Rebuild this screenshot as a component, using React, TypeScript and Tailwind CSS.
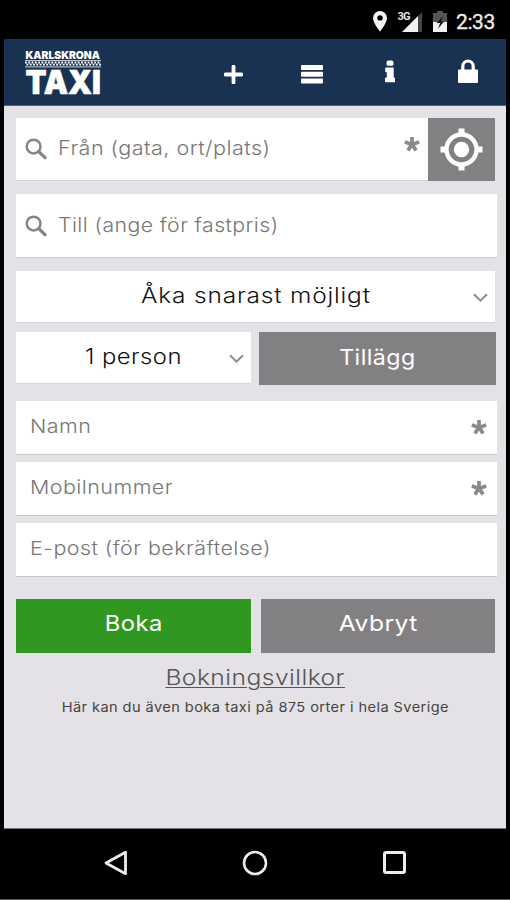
import React from "react";

function SearchIcon() {
  return (
    <svg className="h-[22px] w-[22px] shrink-0" viewBox="0 0 22 22" fill="none" stroke="#858585">
      <circle cx="8.6" cy="8.6" r="6.9" strokeWidth="2.5" />
      <path d="M13.8 13.6 20 19.6" strokeWidth="3.4" strokeLinecap="round" />
    </svg>
  );
}

function Chevron() {
  return (
    <svg className="h-[9px] w-[15px]" viewBox="0 0 15 9" fill="none" stroke="#8d8d8d" strokeWidth="2">
      <path d="M1 1.2 7.5 7.6 14 1.2" />
    </svg>
  );
}

function Star() {
  return (
    <svg className="h-[16px] w-[16px]" viewBox="0 0 16 16" stroke="#8a8a8a" strokeWidth="3.7">
      <path d="M8 8.4V1M8 8.4 .8 6M8 8.4 15.2 6M8 8l-4 6.4M8 8l4 6.4" />
    </svg>
  );
}

function StatusBar() {
  return (
    <div className="flex h-[39px] items-start pl-[373px]">
      <svg className="mt-[11px] h-[21px] w-[14px]" viewBox="0 0 14 21">
        <path fill="#f2f2f2" fillRule="evenodd" d="M7 0a7 7 0 0 0-7 7c0 5 7 13.5 7 13.5S14 12 14 7a7 7 0 0 0-7-7Zm0 4.2a2.7 2.7 0 1 1 0 5.4 2.7 2.7 0 0 1 0-5.4Z" />
      </svg>
      <svg className="mt-[11px] ml-[10px] h-[22px] w-[26px]" viewBox="0 0 26 22">
        <path fill="#444" d="M25 1v20h-5V6Z" />
        <path fill="#f2f2f2" d="M21 5v16H5Z" />
        <text x="0.5" y="8.8" fontSize="11" fontWeight="700" letterSpacing="-.9" fill="#e3e3e3" fontFamily="Roboto, sans-serif">3G</text>
      </svg>
      <svg className="mt-[11px] ml-[10px] h-[21px] w-[14px]" viewBox="0 0 14 21">
        <path fill="#555" d="M4 0h6v2h4v9H0V2h4Z" />
        <path fill="#f2f2f2" d="M0 11h14v10H0Z" />
        <path fill="#111" d="M10.5 5 3.5 12h3.7L5 17.7l6-7.3H7.8Z" />
      </svg>
      <span className="mt-[9px] ml-[9px] font-[Roboto,sans-serif] text-[21px] leading-[26px] tracking-[-0.4px] text-[#eee] [-webkit-text-stroke:0.3px_#eee]">2:33</span>
    </div>
  );
}

function Logo() {
  return (
    <svg className="mt-[8px] ml-[17px] h-[54px] w-[85px] shrink-0" viewBox="-4 -4 85 54" fill="#fff" fontFamily="Inter, sans-serif" fontWeight="900">
      <text x=".5" y="7.8" fontSize="10.3" textLength="74.5" lengthAdjust="spacingAndGlyphs">KARLSKRONA</text>
      <path d="M0 9.6h76M0 15.9h76" stroke="#fff" strokeWidth=".8" />
      <path d="M0 11.5h76M1.5 13.6h74.5" stroke="#fff" strokeWidth="1.8" strokeDasharray="1.8 1.5" />
      <text x=".5" y="42.8" fontSize="33" textLength="75.5" lengthAdjust="spacingAndGlyphs" stroke="#fff" strokeWidth=".6">TAXI</text>
    </svg>
  );
}

function Header() {
  return (
    <header className="flex h-[67px] items-start border-b border-[#52657d] bg-[#193252]">
      <Logo />
      <svg className="mt-[26px] ml-[118px] h-[19px] w-[19px]" viewBox="0 0 19 19">
        <path d="M9.5 1.6v15.8M1.6 9.5h15.8" stroke="#fff" strokeWidth="3.8" strokeLinecap="round" />
      </svg>
      <svg className="mt-[26px] ml-[58px] h-[19px] w-[22px]" viewBox="0 0 22 19" fill="#fff">
        <rect y="0" width="22" height="5" rx=".8" />
        <rect y="6.8" width="22" height="5" rx=".8" />
        <rect y="13.6" width="22" height="5" rx=".8" />
      </svg>
      <svg className="mt-[21px] ml-[62px] h-[24px] w-[10px]" viewBox="0 0 10 24" fill="#fff">
        <rect x="1.6" y="0.6" width="6.8" height="5.2" rx="1.6" />
        <path d="M1 7.6h7a.7.7 0 0 1 .7.7V17.6h.5a.8.8 0 0 1 .8.8v3.1a.8.8 0 0 1-.8.8H.8a.8.8 0 0 1-.8-.8v-3.1a.8.8 0 0 1 .8-.8h1v-5.4H1a.8.8 0 0 1-.8-.8V8.4A.8.8 0 0 1 1 7.6Z" />
      </svg>
      <svg className="mt-[20px] ml-[63px] h-[25px] w-[20px]" viewBox="0 0 20 25">
        <path d="M4.8 12V7.2a5.2 5.2 0 0 1 10.4 0V12" fill="none" stroke="#fff" strokeWidth="3.2" />
        <rect y="10.5" width="20" height="13.5" rx="1.2" fill="#fff" />
      </svg>
    </header>
  );
}

function Field({ label, required }: { label: string; required?: boolean }) {
  return (
    <div className="flex h-[54px] w-[481px] items-center justify-between border-b border-[#c8c7c9] bg-white pr-[10px] pl-[14px] text-[19px] font-light text-[#777]">
      <span className="origin-left scale-x-[1.13] whitespace-nowrap tracking-[0.4px]">{label}</span>
      {required && <span className="-mt-[2px]"><Star /></span>}
    </div>
  );
}

export default function App() {
  return (
    <div className="flex h-[900px] w-[510px] flex-col overflow-hidden border-b border-[#555] bg-black font-[Inter,sans-serif]">
      <StatusBar />
      <div className="mr-[4px] ml-[4px] flex h-[790px] flex-col border-b border-[#77767a] bg-[#e4e2e6]">
        <Header />
        <main className="flex flex-col pl-[12px]">
          <div className="mt-[12px] flex h-[63px] w-[479px] border-b border-[#d5d3d6] bg-white">
            <div className="flex flex-1 items-center pl-[9px] text-[19.5px] font-light text-[#777]">
              <SearchIcon />
              <span className="ml-[11px] origin-left scale-x-[1.107] whitespace-nowrap tracking-[0.4px]">Från (gata, ort/plats)</span>
              <span className="-mt-[11px] mr-[8px] ml-auto"><Star /></span>
            </div>
            <div className="flex h-[63px] w-[67px] items-center justify-center bg-[#838083]">
              <svg className="h-[43px] w-[43px]" viewBox="0 0 43 43">
                <circle cx="21.5" cy="21.5" r="15" fill="none" stroke="#fff" strokeWidth="4.4" />
                <circle cx="21.5" cy="21.5" r="7.7" fill="#fff" />
                <path d="M21.5 .5v6M21.5 36.5v6M.5 21.5h6M36.5 21.5h6" stroke="#fff" strokeWidth="6" />
              </svg>
            </div>
          </div>

          <div className="mt-[13px] flex h-[64px] w-[481px] items-center border-b border-[#cfcdd0] bg-white pl-[9px] text-[19.5px] font-light text-[#777]">
            <SearchIcon />
            <span className="ml-[11px] origin-left scale-x-[1.09] whitespace-nowrap tracking-[0.4px]">Till (ange för fastpris)</span>
          </div>

          <div className="mt-[13px] flex h-[52px] w-[479px] items-center border-b border-[#d8d6d9] bg-white pr-[7px] text-[21px] font-light text-[#111]">
            <span className="-mt-[1px] ml-[125px] origin-left scale-x-[1.165] whitespace-nowrap tracking-[0.7px]">Åka snarast möjligt</span>
            <span className="mt-[2px] ml-auto"><Chevron /></span>
          </div>

          <div className="mt-[9px] flex h-[53px] w-[480px] items-start justify-between">
            <div className="flex h-[52px] w-[235px] items-center border-b border-[#d8d6d9] bg-white pr-[7px] text-[21px] font-light text-[#111]">
              <span className="-mt-[1px] ml-[69px] origin-left scale-x-[1.135] whitespace-nowrap tracking-[0.4px]">1 person</span>
              <span className="mt-[2px] ml-auto"><Chevron /></span>
            </div>
            <button className="flex h-[53px] w-[237px] items-center justify-center bg-[#838083] pb-[3px] text-[21.5px] text-white">
              <span className="scale-x-[1.08] tracking-[0.4px]">Tillägg</span>
            </button>
          </div>

          <div className="mt-[16px] flex flex-col gap-[7px]">
            <Field label="Namn" required />
            <Field label="Mobilnummer" required />
            <Field label="E-post (för bekräftelse)" />
          </div>

          <div className="mt-[22px] flex h-[54px] w-[479px] justify-between text-[22px] text-white">
            <button className="flex w-[235px] items-center justify-center bg-[#309720] pb-[5px]">
              <span className="scale-x-[1.08] tracking-[0.4px]">Boka</span>
            </button>
            <button className="flex w-[234px] items-center justify-center bg-[#838083] pb-[5px]">
              <span className="scale-x-[1.12] tracking-[0.4px]">Avbryt</span>
            </button>
          </div>

          <div className="flex w-[479px] flex-col items-center">
            <a className="mt-[9px] scale-x-[1.12] text-[22px] leading-[30px] font-light tracking-[0.4px] whitespace-nowrap text-[#555] underline decoration-1 underline-offset-[2px]">Bokningsvillkor</a>
            <p className="mt-[5px] scale-x-[1.08] text-[13.5px] leading-[20px] tracking-[0.4px] whitespace-nowrap text-[#444]">Här kan du även boka taxi på 875 orter i hela Sverige</p>
          </div>
        </main>
      </div>

      <nav className="flex h-[69px] items-start pt-[21px]">
        <svg className="ml-[103px] h-[26px] w-[25px]" viewBox="0 0 25 26">
          <path d="M22.5 2.3v21.4L3 13Z" fill="none" stroke="#ececec" strokeWidth="2.8" strokeLinejoin="round" />
        </svg>
        <svg className="ml-[114px] h-[26px] w-[26px]" viewBox="0 0 26 26">
          <circle cx="13" cy="13" r="11" fill="none" stroke="#ececec" strokeWidth="2.6" />
        </svg>
        <svg className="ml-[114px] h-[26px] w-[25px]" viewBox="0 0 25 26">
          <rect x="2.5" y="2.5" width="20" height="20" rx="1.5" fill="none" stroke="#ececec" strokeWidth="3" />
        </svg>
      </nav>
    </div>
  );
}
